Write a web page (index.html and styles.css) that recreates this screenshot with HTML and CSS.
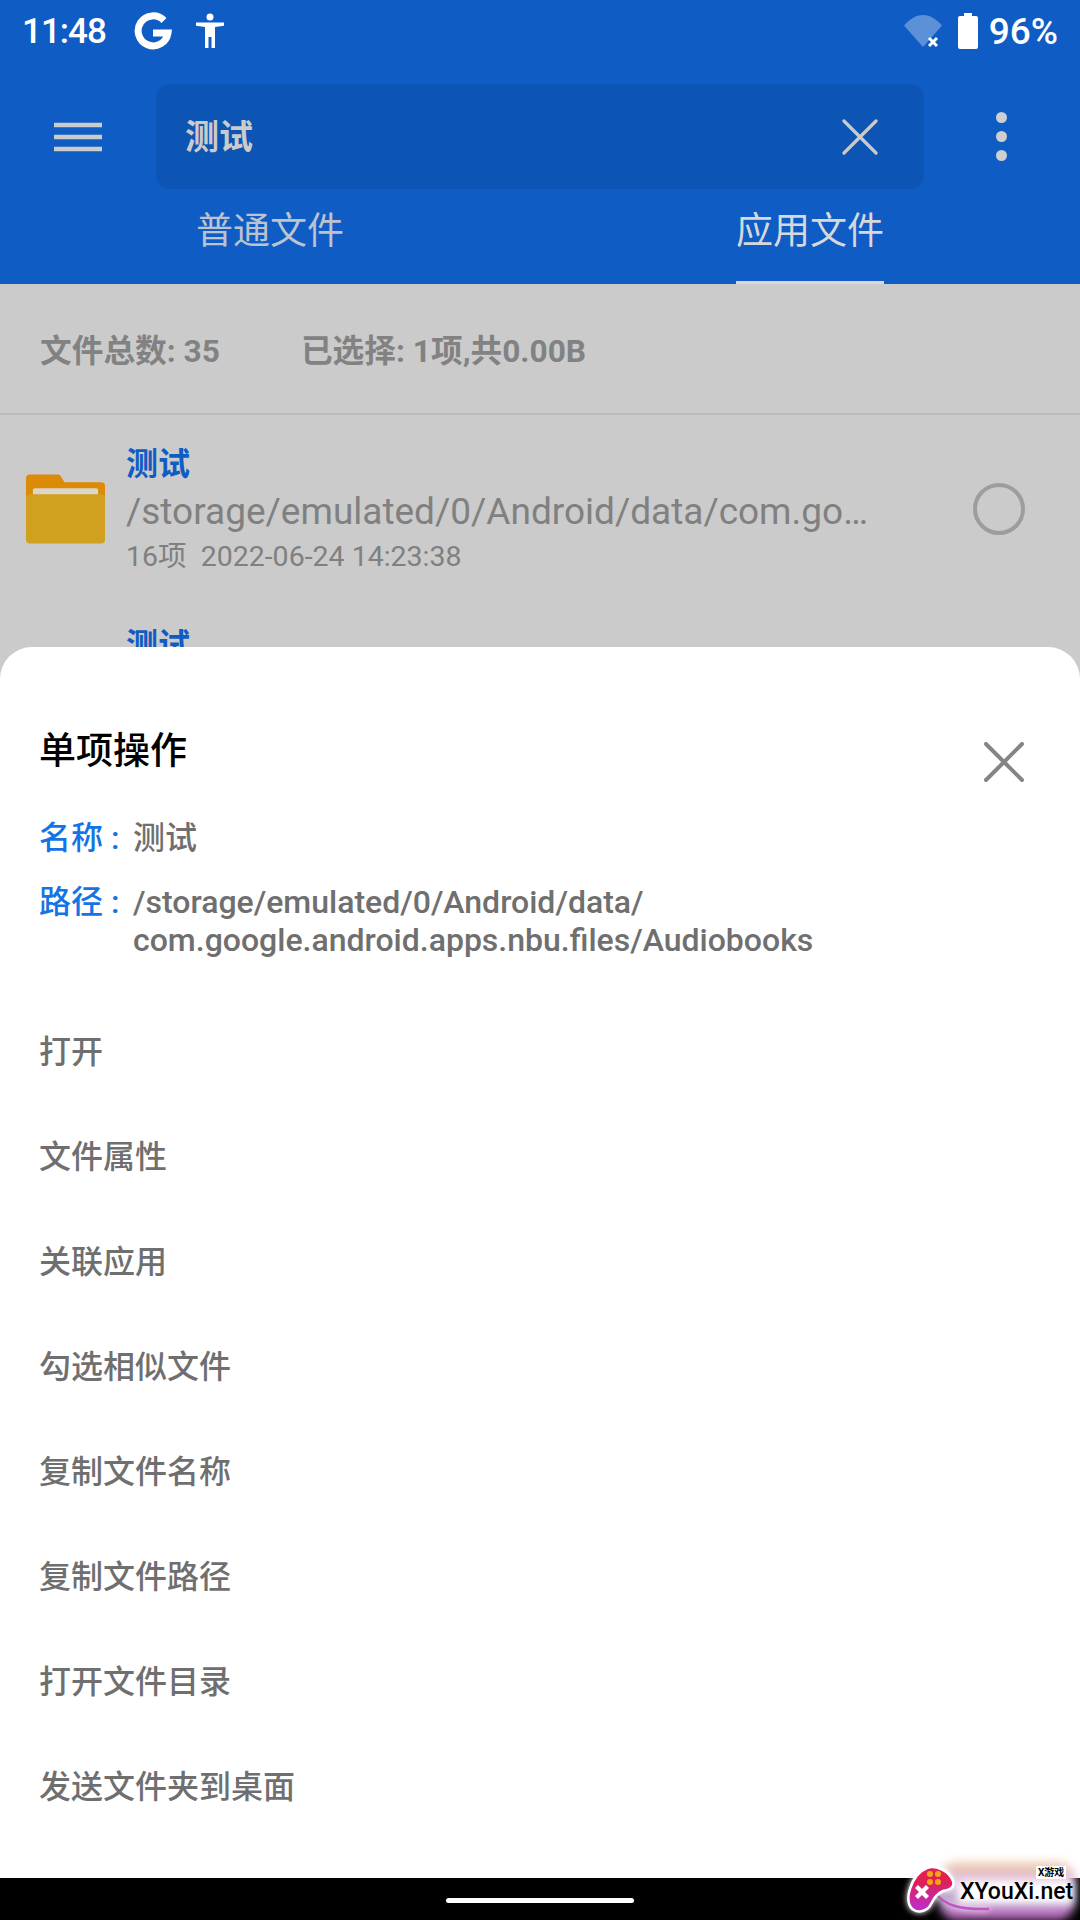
FILE: index.html

```html
<!DOCTYPE html>
<html lang="zh">
<head>
  <meta charset="UTF-8" />
  <meta name="viewport" content="width=device-width, initial-scale=1" />
  <title>文件管理</title>
  <link rel="stylesheet" href="styles.css">
</head>
<body>
  <div class="app">
    <header class="top">
      <div class="status">
        <div class="status-left">
          <span class="clock">11:48</span>
          <svg class="ic-g" viewBox="0 0 38 38"><path d="M30 8.500A15 15 0 1 0 34 21H19" fill="none" stroke="#fff" stroke-width="7"/></svg>
          <svg class="ic-access" viewBox="0 0 30 36"><circle cx="15" cy="4" r="3.500" fill="#fff"/><path d="M1 9.500h28v3.200l-9 1.300V35h-3.500V24h-3v11H10V14l-9-1.300z" fill="#fff"/></svg>
        </div>
        <div class="status-right">
          <svg class="ic-wifi" viewBox="0 0 40 34"><path d="M1 11.500C6 6 12.500 1 20 1s14 5 19 10.500L20 33z" fill="#fff" opacity=".32"/><path d="M26 24l8 8M34 24l-8 8" stroke="#fff" stroke-width="3"/></svg>
          <svg class="ic-batt" viewBox="0 0 20 36"><path d="M6 0h8v3h4a2 2 0 0 1 2 2v29a2 2 0 0 1-2 2H2a2 2 0 0 1-2-2V5a2 2 0 0 1 2-2h4z" fill="#fff"/></svg>
          <span class="pct">96%</span>
        </div>
      </div>
      <div class="toolbar">
        <svg class="ic-menu" viewBox="0 0 48 30"><path d="M0 3h48M0 15h48M0 27h48" stroke="#cbcbcb" stroke-width="4.500"/></svg>
        <div class="search">
          <span class="search-text">测试</span>
          <svg class="ic-clear" viewBox="0 0 36 36"><path d="M2 2l32 32M34 2L2 34" stroke="#cbcbcb" stroke-width="3.200" stroke-linecap="round"/></svg>
        </div>
        <div class="more"><i></i><i></i><i></i></div>
      </div>
      <nav class="tabs">
        <div class="tab">普通文件</div>
        <div class="tab tab-on">应用文件</div>
      </nav>
    </header>

    <main class="content">
      <div class="summary">
        <span>文件总数: 35</span>
        <span>已选择: 1项,共0.00B</span>
      </div>
      <div class="file">
        <svg class="folder" viewBox="0 0 80 70"><path d="M4 0h28c2 0 3 1 4 3l3 5h37a4 4 0 0 1 4 4v20H0V4a4 4 0 0 1 4-4z" fill="#dc8b06"/><rect x="7" y="14" width="66" height="8" rx="2" fill="#dbd6c8"/><path d="M0 24c0-2 1-4 3-4h74c2 0 3 2 3 4v42a4 4 0 0 1-4 4H4a4 4 0 0 1-4-4z" fill="#d1a01f"/></svg>
        <div class="file-body">
          <div class="file-name">测试</div>
          <div class="file-path">/storage/emulated/0/Android/data/com.go…</div>
          <div class="file-meta">16项&nbsp;&nbsp;2022-06-24 14:23:38</div>
        </div>
        <div class="radio"></div>
      </div>
      <div class="file file-next">
        <div class="file-name">测试</div>
      </div>
    </main>

    <section class="sheet">
      <div class="sheet-head">
        <h2 class="sheet-title">单项操作</h2>
        <svg class="ic-close" viewBox="0 0 40 40"><path d="M2 2l36 36M38 2L2 38" stroke="#858585" stroke-width="4" stroke-linecap="round"/></svg>
      </div>
      <div class="info">
        <span class="info-key">名称 :</span>
        <span class="info-val">测试</span>
      </div>
      <div class="info info-path">
        <span class="info-key">路径 :</span>
        <span class="info-val">/storage/emulated/0/Android/data/<br>com.google.android.apps.nbu.files/Audiobooks</span>
      </div>
      <ul class="actions">
        <li>打开</li>
        <li>文件属性</li>
        <li>关联应用</li>
        <li>勾选相似文件</li>
        <li>复制文件名称</li>
        <li>复制文件路径</li>
        <li>打开文件目录</li>
        <li>发送文件夹到桌面</li>
      </ul>
    </section>

    <footer class="navbar"><div class="handle"></div></footer>

    <div class="mark">
      <div class="mark-glow"></div>
      <div class="mark-halo"></div>
      <svg class="mark-pad" viewBox="0 0 175 60">
        <defs>
          <linearGradient id="padfill" x1="0" y1="0" x2="0" y2="1">
            <stop offset="0.3" stop-color="#e0204f"/>
            <stop offset="0.9" stop-color="#bf2bc4"/>
          </linearGradient>
        </defs>
        <path d="M32 35C40 44 52 50 84 49" fill="none" stroke="#c552c4" stroke-width="2.500"/>
        <path d="M22 8C30 5 44 10 48 21C50 28 44 30 38 31C33 33 29 38 26 44C23 51 14 53 9 50C3 47 2 38 5 29C8 19 14 11 22 8Z" fill="url(#padfill)" stroke="#fff" stroke-width="2.500"/>
        <path d="M13 25l4 4 4-4 3 3-4 4 4 4-3 3-4-4-4 4-3-3 4-4-4-4z" fill="#fff"/>
        <circle cx="25" cy="14" r="3" fill="#f6a31b"/><circle cx="33" cy="14" r="3" fill="#f6a31b"/>
        <circle cx="25" cy="22" r="3" fill="#f6a31b"/><circle cx="33" cy="22" r="3" fill="#f6a31b"/>
      </svg>
      <span class="mark-small">X游戏</span>
      <span class="mark-name">XYouXi.net</span>
    </div>
  </div>
</body>
</html>
```

FILE: styles.css

```css
* {
  box-sizing: border-box;
}
html, body {
  margin: 0;
  padding: 0;
}
body {
  font-family: Roboto, "Noto Sans CJK SC", sans-serif;
  background-color: #fff;
}
.app {
  position: relative;
  width: 1080px;
  height: 1920px;
  overflow: hidden;
  display: flex;
  flex-direction: column;
  background-color: #cbcbcb;
}

/* blue header */
.top {
  height: 284px;
  flex: none;
  background-color: #0f5cc4;
}
.status {
  height: 66px;
  display: flex;
  justify-content: space-between;
  align-items: center;
  padding: 0 22px 4px;
  color: #fff;
}
.status-left, .status-right {
  display: flex;
  align-items: center;
}
.clock {
  font-size: 35px;
  font-weight: 500;
  letter-spacing: -1px;
  width: 112px;
}
.ic-g {
  width: 38px;
  height: 38px;
}
.ic-access {
  width: 30px;
  height: 36px;
  margin-left: 23px;
}
.ic-wifi {
  width: 40px;
  height: 34px;
  margin-right: 15px;
}
.ic-batt {
  width: 20px;
  height: 36px;
  margin-right: 11px;
}
.pct {
  font-size: 37px;
  font-weight: 500;
}
.toolbar {
  height: 123px;
  padding-top: 18px;
  display: flex;
  align-items: center;
}
.ic-menu {
  width: 48px;
  height: 30px;
  margin-left: 54px;
  flex: none;
}
.search {
  width: 768px;
  height: 105px;
  margin-left: 54px;
  padding: 0 46px 0 29px;
  display: flex;
  align-items: center;
  justify-content: space-between;
  background-color: #0d55b5;
  border-radius: 14px;
}
.search-text {
  font-size: 34px;
  font-weight: 700;
  color: #cbcbcb;
  margin-top: -4px;
}
.ic-clear {
  width: 36px;
  height: 36px;
}
.more {
  margin-left: 72px;
  display: flex;
  flex-direction: column;
  gap: 8px;
}
.more i {
  display: block;
  width: 11px;
  height: 11px;
  border-radius: 50%;
  background-color: #cfcfcf;
}
.tabs {
  height: 95px;
  display: flex;
}
.tab {
  width: 540px;
  height: 95px;
  padding-top: 18px;
  text-align: center;
  font-size: 37px;
  line-height: 50px;
  color: #bcc3cf;
}
.tab-on {
  position: relative;
  color: #d6d8dc;
}
.tab-on::after {
  content: "";
  position: absolute;
  left: 196px;
  bottom: 0;
  width: 148px;
  height: 3px;
  background-color: #d6d8dc;
}

/* list behind the sheet */
.content {
  flex: 1;
  background-color: #cbcbcb;
}
.summary {
  height: 131px;
  padding: 0 0 2px 40px;
  display: flex;
  align-items: center;
  gap: 81px;
  border-bottom: 2px solid #bdbdbd;
  font-size: 31.700px;
  font-weight: 700;
  color: #828282;
}
.file {
  height: 188px;
  display: flex;
  align-items: center;
}
.folder {
  width: 79px;
  height: 70px;
  margin-left: 26px;
  flex: none;
}
.file-body {
  width: 746px;
  margin-left: 21px;
}
.file-name {
  font-size: 32px;
  line-height: 44px;
  font-weight: 700;
  color: #0f5cc4;
}
.file-path {
  font-size: 37px;
  line-height: 52px;
  color: #808080;
  white-space: nowrap;
}
.file-meta {
  font-size: 28.500px;
  line-height: 38px;
  color: #808080;
}
.radio {
  width: 52px;
  height: 52px;
  margin-left: 101px;
  flex: none;
  border: 4px solid #9d9d9d;
  border-radius: 50%;
}
.file-next {
  height: 60px;
  padding: 20px 0 0 126px;
  align-items: flex-start;
}

/* bottom sheet */
.sheet {
  position: absolute;
  left: 0;
  right: 0;
  top: 647px;
  bottom: 42px;
  padding: 0 39px;
  background-color: #fff;
  border-radius: 32px 32px 0 0;
}
.sheet-head {
  height: 172px;
  display: flex;
  justify-content: space-between;
  align-items: flex-start;
}
.sheet-title {
  margin: 80px 0 0;
  font-size: 37px;
  line-height: 50px;
  font-weight: 500;
  color: #000;
}
.ic-close {
  width: 40px;
  height: 40px;
  margin: 95px 17px 0 0;
}
.info {
  display: flex;
  gap: 12px;
  font-size: 32px;
  line-height: 38px;
  font-weight: 500;
  color: #6f6f6f;
}
.info-key {
  color: #1473e6;
  flex: none;
  width: 82px;
}
.info-path {
  margin-top: 26px;
}
.actions {
  list-style: none;
  margin: 37px 0 0;
  padding: 0;
}
.actions li {
  height: 105px;
  display: flex;
  align-items: center;
  font-size: 32px;
  font-weight: 500;
  color: #6f6f6f;
}

/* gesture bar */
.navbar {
  position: absolute;
  left: 0;
  right: 0;
  bottom: 0;
  height: 42px;
  background-color: #000;
  display: flex;
  justify-content: center;
  padding-top: 20px;
}
.handle {
  width: 188px;
  height: 5px;
  border-radius: 3px;
  background-color: #fff;
}

/* watermark */
.mark {
  position: absolute;
  left: 905px;
  top: 1860px;
  width: 175px;
  height: 60px;
}
.mark-glow {
  position: absolute;
  left: 34px;
  top: 2px;
  width: 136px;
  height: 58px;
  border-radius: 18px;
  background: linear-gradient(#f0cfa8, #dcb4e0 35%, #b9a2cc 65%, #bd62bd);
  filter: blur(5px);
}
.mark-halo {
  position: absolute;
  left: 52px;
  top: 20px;
  width: 116px;
  height: 24px;
  background-color: #fff;
  filter: blur(4px);
}
.mark-pad {
  position: absolute;
  left: 0;
  top: 0;
  width: 175px;
  height: 60px;
  filter: drop-shadow(0 0 3px #fff);
}
.mark-small {
  position: absolute;
  left: 131px;
  top: 6px;
  padding: 0 2px;
  font-size: 10px;
  line-height: 13px;
  font-weight: 700;
  color: #000;
  background-color: #fff;
}
.mark-name {
  position: absolute;
  left: 55px;
  top: 17px;
  font-size: 23px;
  line-height: 30px;
  font-weight: 500;
  white-space: nowrap;
  color: #000;
}
```
